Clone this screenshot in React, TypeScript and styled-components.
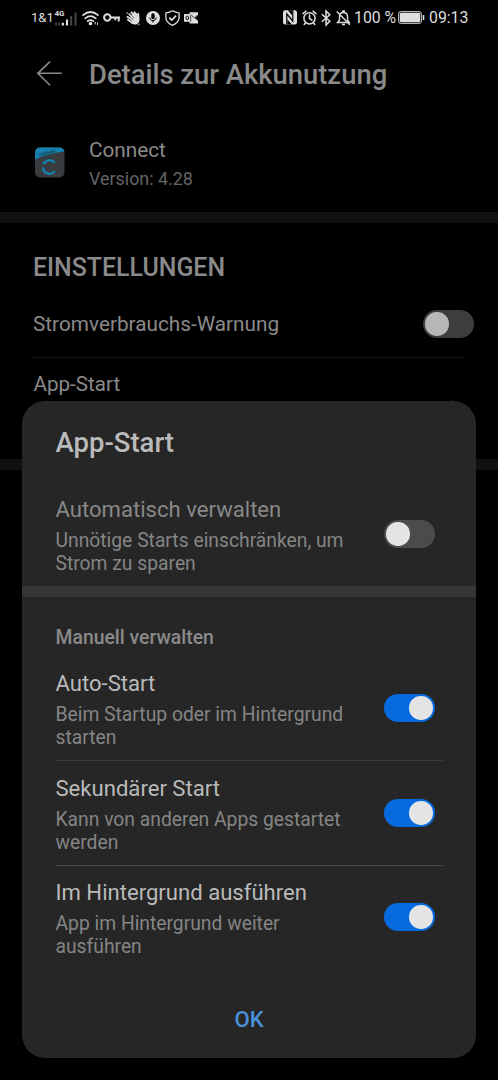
import React from "react";
import styled, { createGlobalStyle } from "styled-components";

const GlobalStyle = createGlobalStyle`
  * { box-sizing: border-box; }
  html, body { margin: 0; padding: 0; background: #000; }
  body { font-family: Roboto, "Liberation Sans", sans-serif; overflow: hidden; }
`;

const Screen = styled.main`
  position: relative;
  width: 498px;
  height: 1080px;
  background: #000;
  color: #8a8a8a;
  overflow: hidden;
`;

const StatusBar = styled.header`
  display: flex;
  justify-content: space-between;
  height: 35px;
  padding: 0 30px 0 31px;
  color: #dedede;
`;

const StatusGroup = styled.div`
  display: flex;
  align-items: center;
`;

const StatusText = styled.span<{ $size: number; $left?: number; $width: number }>`
  width: ${(p) => p.$width}px;
  margin-left: ${(p) => p.$left ?? 0}px;
  font-size: ${(p) => p.$size}px;
  line-height: 35px;
  white-space: nowrap;
`;

const StatusIcon = styled.svg<{ $left: number }>`
  display: block;
  flex: none;
  margin-left: ${(p) => p.$left}px;
  fill: none;
  stroke: currentColor;
  overflow: visible;
`;

const Cellular = styled.div`
  display: flex;
  flex-direction: column;
  width: 23px;
  height: 17px;
  margin-left: 3px;
`;

const NetworkType = styled.span`
  height: 7px;
  padding-left: 0.5px;
  font-size: 8px;
  font-weight: 700;
  line-height: 10px;
`;

const SignalBars = styled.svg`
  display: block;
  flex: none;
  margin-top: -5px;
`;

const AppBar = styled.div`
  display: flex;
  align-items: center;
  height: 78px;
  padding-left: 36px;
`;

const PageTitle = styled.h1`
  margin: 2px 0 0 26px;
  font-size: 27.4px;
  font-weight: 500;
  line-height: 32px;
`;

const AppInfo = styled.section`
  display: flex;
  align-items: center;
  height: 99px;
  padding: 0 0 0 34px;
`;

const AppText = styled.div`
  margin: 2px 0 0 24px;
`;

const AppName = styled.div`
  font-size: 20.75px;
  line-height: 30px;
`;

const AppVersion = styled.div`
  font-size: 17.9px;
  line-height: 28px;
  color: #646464;
`;

const Band = styled.div<{ $color: string }>`
  height: 11px;
  background: ${(p) => p.$color};
`;

const SectionTitle = styled.h2`
  margin: 0;
  padding: 29px 0 0 33px;
  height: 68px;
  font-size: 24.9px;
  font-weight: 500;
  line-height: 32px;
`;

const SettingRow = styled.div`
  display: flex;
  justify-content: space-between;
  align-items: center;
  height: 66px;
  padding: 0 24px 0 33px;
  font-size: 20.75px;
`;

const Divider = styled.div<{ $left: number; $right: number; $color: string }>`
  height: 1px;
  margin: 0 ${(p) => p.$right}px 0 ${(p) => p.$left}px;
  background: ${(p) => p.$color};
`;

const StartRow = styled.div`
  display: flex;
  justify-content: space-between;
  align-items: flex-start;
  height: 101px;
  padding: 14px 39px 0 33.5px;
  font-size: 20.6px;
  line-height: 24px;
`;

const Chevron = styled.svg`
  display: block;
  margin-top: 27.5px;
`;

const Track = styled.span<{ $on?: boolean; $dim?: boolean }>`
  display: flex;
  flex: none;
  justify-content: ${(p) => (p.$on ? "flex-end" : "flex-start")};
  width: 51px;
  height: 28px;
  padding: 2.3px;
  border-radius: 14px;
  background: ${(p) => (p.$on ? "#056ade" : p.$dim ? "#3d3d3d" : "#4b4b4b")};
`;

const Knob = styled.span<{ $dim?: boolean }>`
  width: 23.4px;
  height: 23.4px;
  border-radius: 50%;
  background: ${(p) => (p.$dim ? "#b7b7b7" : "#e4e4e4")};
`;

const Dialog = styled.section`
  position: absolute;
  left: 22px;
  top: 401px;
  width: 454px;
  height: 657px;
  border-radius: 23px;
  background: #262626;
`;

const DialogTitle = styled.h2`
  margin: 0;
  height: 81px;
  padding: 25px 0 0 33.5px;
  font-size: 27.5px;
  font-weight: 500;
  line-height: 34px;
  color: #bababa;
`;

const Option = styled.div<{ $last?: boolean }>`
  display: flex;
  justify-content: space-between;
  align-items: center;
  height: ${(p) => (p.$last ? 102 : 104)}px;
  padding: 0 41px 0 33.5px;
`;

const OptionText = styled.div<{ $last?: boolean }>`
  align-self: flex-start;
  width: 310px;
  padding-top: ${(p) => (p.$last ? 13 : 14)}px;
`;

const OptionTitle = styled.div<{ $muted?: boolean }>`
  font-size: 22.1px;
  line-height: 26px;
  color: ${(p) => (p.$muted ? "#888" : "#bababa")};
`;

const OptionDescription = styled.div`
  margin-top: 7px;
  font-size: 19.3px;
  line-height: 23px;
  color: #858585;
`;

const GroupLabel = styled.h3`
  margin: 0;
  height: 59px;
  padding: 29px 0 0 33.5px;
  font-size: 19.4px;
  font-weight: 500;
  line-height: 24px;
  color: #8a8a8a;
`;

const ConfirmButton = styled.button`
  display: block;
  width: 100%;
  height: 52px;
  margin-top: 25px;
  padding: 0;
  border: 0;
  background: none;
  font: 500 22.1px/52px Roboto, sans-serif;
  color: #4a90dc;
`;

function Toggle({ on, dim }: { on?: boolean; dim?: boolean }) {
  return (
    <Track $on={on} $dim={dim} role="switch" aria-checked={!!on}>
      <Knob $dim={dim} />
    </Track>
  );
}

function OptionItem(props: { title: string; lines: [string, string]; on?: boolean; muted?: boolean; last?: boolean }) {
  return (
    <Option $last={props.last}>
      <OptionText $last={props.last}>
        <OptionTitle $muted={props.muted}>{props.title}</OptionTitle>
        <OptionDescription>
          {props.lines[0]}
          <br />
          {props.lines[1]}
        </OptionDescription>
      </OptionText>
      <Toggle on={props.on} />
    </Option>
  );
}

function StatusLeft() {
  return (
    <StatusGroup>
      <StatusText $size={13} $width={20}>1&amp;1</StatusText>
      <Cellular>
        <NetworkType>4G</NetworkType>
        <SignalBars width="23" height="15" viewBox="0 4 23 15">
          <path d="M2 15.500v3M5 15.500v3" stroke="#444" strokeWidth="1.800" />
          <path d="M8.800 15.800v2.700M13 12.500v6" stroke="#dedede" strokeWidth="2.200" />
          <path d="M17.200 9v9.500M21.500 5.500v13" stroke="#484848" strokeWidth="2" />
        </SignalBars>
      </Cellular>
      <StatusIcon $left={5} width="17" height="16" viewBox="0 0 17 16" strokeWidth="1.700" strokeLinecap="round">
        <path d="M1 5.200Q8.500-1.200 16 5.200M3.200 8.300q5.300-4.500 10.600 0M5.600 11.200q2.900-2.300 5.800 0" />
        <circle cx="8.500" cy="13.500" r="1" fill="currentColor" />
        <path d="M13.200 12.300v1.700M15.500 12.800v1.700" strokeWidth="1" />
      </StatusIcon>
      <StatusIcon $left={4} width="18" height="12" viewBox="0 0 18 12" strokeWidth="2">
        <circle cx="4.300" cy="5.500" r="3.200" />
        <path d="M7.500 5.500H17M15.700 5.500v4M12.300 5.500v2.700" />
      </StatusIcon>
      <StatusIcon $left={5} width="15" height="16" viewBox="0 0 15 16" strokeLinecap="round">
        <path d="M4 6L8 3l3 2.500L11.300 3c1-.8 2 .2 1.900 2l.4 4.500c0 3.300-2.600 5.500-5.300 5-1.800-.3-3.300-1.500-4.300-2.700z" fill="currentColor" stroke="none" />
        <path d="M5.500 2.500L9.500 7M3.200 4.200L7.500 8.500M1.500 6.700L6.500 10.500M2 9.700L6.500 13M8.500 2.300l2.500 3" strokeWidth="1.900" />
        <path d="M4.500 4L8 7.800M3 6l4 3.600M2.500 8.700l3.500 2.500" stroke="#000" strokeWidth=".5" />
        <path d="M.7 4l.8-1.500M12 15l1.700-1" strokeWidth=".8" />
      </StatusIcon>
      <StatusIcon $left={5} width="14" height="14" viewBox="0 0 14 14">
        <circle cx="7" cy="7" r="7" fill="currentColor" stroke="none" />
        <rect x="5.300" y="2.200" width="3.400" height="6" rx="1.700" fill="#000" stroke="none" />
        <path d="M3.800 6.500c0 4.200 6.400 4.200 6.400 0M7 9.700v2" stroke="#000" strokeWidth="1" />
      </StatusIcon>
      <StatusIcon $left={5} width="15" height="16" viewBox="0 0 15 16" strokeWidth="1.300" strokeLinejoin="round">
        <path d="M7.500.8C5.500 2.200 3.300 2.700.9 2.800v4.700c0 3.500 2.600 6 6.600 7.800 4-1.800 6.600-4.300 6.600-7.800V2.800C11.700 2.700 9.500 2.200 7.500.8z" />
        <path d="M4.300 7.600l2.500 2.600 4.200-4.600" strokeWidth="1.700" />
      </StatusIcon>
      <StatusIcon $left={4} width="15" height="12" viewBox="0 0 15 12">
        <path d="M0 2h5.500V.3H14V3.500L10.800 6 14 8.800V11.500H5.500V9.800H0z" fill="currentColor" stroke="none" />
        <ellipse cx="3.300" cy="5.900" rx="1.300" ry="1.800" stroke="#000" strokeWidth="1" />
        <path d="M6.700 2.500v7M7.500 3.300l2.800 2.500L14 3" stroke="#000" strokeWidth=".7" />
      </StatusIcon>
    </StatusGroup>
  );
}

function StatusRight() {
  return (
    <StatusGroup>
      <StatusIcon $left={0} width="14" height="15" viewBox="0 0 14 15">
        <rect x="0" y=".3" width="14" height="14.200" rx="2.200" fill="currentColor" stroke="none" />
        <path d="M3.800 14.500V3.800L9.800 11.200V.3" stroke="#000" strokeWidth="1.200" />
        <path d="M4.800.3L9.300 5.500V.3zM4.400 9.500V14.500H8.900z" fill="#000" stroke="none" />
      </StatusIcon>
      <StatusIcon $left={5} width="15" height="16" viewBox="0 0 15 16" strokeWidth="1.500" strokeLinecap="round">
        <circle cx="7.500" cy="8.300" r="5.600" />
        <path d="M7.500 5v3.500l2.500 1.700M1 3.700l3-2.500M14 3.700l-3-2.500M3.400 13l-1.200 1.500M11.600 13l1.200 1.500" />
      </StatusIcon>
      <StatusIcon $left={4} width="10" height="16" viewBox="0 0 10 16" strokeWidth="1.500">
        <path d="M.8 4.300l8 7L5 15V1l3.800 3.700-8 7" />
      </StatusIcon>
      <StatusIcon $left={5} width="15" height="16" viewBox="0 0 15 16" strokeWidth="1.400">
        <path d="M1.500 12.500h11.800L11.500 10V6.500c0-2.500-1.500-4-4-4s-4 1.500-4 4V10zM6.800 2.300V1h1.400v1.300M6 14.500h3M.8 1.500l13 13.300" />
      </StatusIcon>
      <StatusText $size={15.8} $left={3} $width={40}>100 %</StatusText>
      <StatusIcon $left={4} width="27" height="13" viewBox="0 0 27 13">
        <rect x=".6" y=".6" width="22.800" height="11.800" rx="2" strokeWidth=".9" />
        <rect x="1.800" y="1.800" width="20.400" height="9.400" rx=".8" fill="currentColor" stroke="none" />
        <path d="M25.500 4v5" strokeWidth="1.600" />
      </StatusIcon>
      <StatusText $size={15.8} $left={4} $width={39}>09:13</StatusText>
    </StatusGroup>
  );
}

function ConnectIcon() {
  return (
    <svg width="31" height="31" viewBox="0 0 31 31">
      <defs>
        <clipPath id="tile"><rect x="1" y=".5" width="29.500" height="30" rx="5" /></clipPath>
      </defs>
      <g clipPath="url(#tile)">
        <rect width="31" height="31" fill="#383c3f" />
        <path d="M0 0h31v4.500Q15 6 0 13z" fill="#1481b0" />
      </g>
      <text x="5.500" y="9.500" fontSize="4.300" fontWeight="500" fontFamily="Roboto, sans-serif" fill="#173b4b" transform="rotate(-14 5.500 9.500)">GARMIN</text>
      <path d="M20.800 15.800A6.600 6.600 0 0 0 9.500 17.300M9 20.200A6.600 6.600 0 0 0 20.800 24.200" fill="none" stroke="#1481b0" strokeWidth="2.300" />
    </svg>
  );
}

export default function App() {
  return (
    <Screen>
      <GlobalStyle />
      <StatusBar>
        <StatusLeft />
        <StatusRight />
      </StatusBar>
      <AppBar>
        <svg width="27" height="26" viewBox="0 0 27 26" fill="none" stroke="#8a8a8a" strokeWidth="1.600">
          <path d="M25.700 12.300H1.800M14 .6L1.800 12.300 14 24.200" />
        </svg>
        <PageTitle>Details zur Akkunutzung</PageTitle>
      </AppBar>
      <AppInfo>
        <ConnectIcon />
        <AppText>
          <AppName>Connect</AppName>
          <AppVersion>Version: 4.28</AppVersion>
        </AppText>
      </AppInfo>
      <Band $color="#111" />
      <SectionTitle>EINSTELLUNGEN</SectionTitle>
      <SettingRow>
        <span>Stromverbrauchs-Warnung</span>
        <Toggle dim />
      </SettingRow>
      <Divider $left={33} $right={34} $color="#151515" />
      <StartRow>
        <span>App-Start</span>
        <Chevron width="12" height="16" viewBox="0 0 12 16" fill="none" stroke="#484848" strokeWidth="1.200">
          <path d="M1 6L6 1l5 5" />
        </Chevron>
      </StartRow>
      <Band $color="#111" />
      <Dialog role="dialog">
        <DialogTitle>App-Start</DialogTitle>
        <OptionItem title="Automatisch verwalten" lines={["Unnötige Starts einschränken, um", "Strom zu sparen"]} muted />
        <Band $color="#363636" />
        <GroupLabel>Manuell verwalten</GroupLabel>
        <OptionItem title="Auto-Start" lines={["Beim Startup oder im Hintergrund", "starten"]} on />
        <Divider $left={33} $right={33} $color="#3a3a3a" />
        <OptionItem title="Sekundärer Start" lines={["Kann von anderen Apps gestartet", "werden"]} on />
        <Divider $left={33} $right={33} $color="#464646" />
        <OptionItem title="Im Hintergrund ausführen" lines={["App im Hintergrund weiter", "ausführen"]} on last />
        <ConfirmButton>OK</ConfirmButton>
      </Dialog>
    </Screen>
  );
}
